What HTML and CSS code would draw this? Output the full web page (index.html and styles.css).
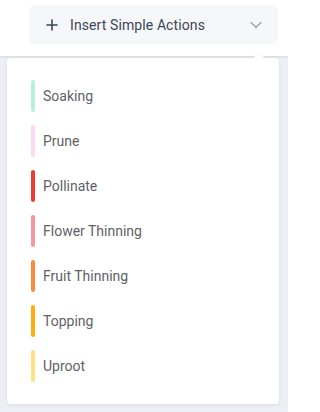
FILE: index.html
```html
<!DOCTYPE html>
<html>
<head>
<meta charset="utf-8">
<link rel="stylesheet" href="styles.css">
</head>
<body>
<div class="top">
  <div class="trigger">
    <svg class="plus" width="12" height="12" viewBox="0 0 12 12"><path d="M6 1v10M1 6h10" stroke="#3d4657" stroke-width="1.6" stroke-linecap="round"/></svg>
    <span class="label">Insert Simple Actions</span>
    <svg class="chev" width="12" height="8" viewBox="0 0 12 8"><path d="M1 1.5l5 5 5-5" fill="none" stroke="#9aa0a8" stroke-width="1.2" stroke-linecap="round" stroke-linejoin="round"/></svg>
  </div>
</div>
<div class="stage">
  <div class="panel">
    <div class="caret"></div>
    <ul class="list">
      <li class="item"><span class="bar" style="background:#b6f0da"></span>Soaking</li>
      <li class="item"><span class="bar" style="background:#fdd8f1"></span>Prune</li>
      <li class="item"><span class="bar" style="background:#f23a38"></span>Pollinate</li>
      <li class="item"><span class="bar" style="background:#f8959e"></span>Flower Thinning</li>
      <li class="item"><span class="bar" style="background:#fd8a3a"></span>Fruit Thinning</li>
      <li class="item"><span class="bar" style="background:#ffac0c"></span>Topping</li>
      <li class="item"><span class="bar" style="background:#fde182"></span>Uproot</li>
    </ul>
  </div>
</div>
</body>
</html>
```
FILE: styles.css
```css
html, body {
  margin: 0;
  padding: 0;
  background: #fff;
}
body {
  width: 288px;
  height: 412px;
  overflow: hidden;
  font-family: Roboto, "Liberation Sans", sans-serif;
}
.top {
  height: 56px;
  box-sizing: border-box;
  padding: 5px 10px 0 29px;
}
.trigger {
  height: 39px;
  background: #f5f7fa;
  border-radius: 6px;
  display: flex;
  align-items: center;
  padding: 0 16px 0 17px;
}
.plus {
  flex: none;
}
.label {
  margin-left: 12px;
  font-size: 14px;
  color: #3d4657;
  flex: 1;
  letter-spacing: 0.1px;
}
.chev {
  flex: none;
}
.stage {
  background: #eceff3;
  border-top: 1px solid #dde1e6;
  box-shadow: inset 0 1px 1px rgba(0,0,0,0.04);
  padding: 1px 9px 9px 7px;
  height: 356px;
  box-sizing: border-box;
}
.panel {
  position: relative;
  background: #fff;
  border-radius: 4px;
  box-shadow: 0 1px 4px rgba(0,0,0,0.08);
  padding: 22px 24px 22px 24px;
}
.caret {
  position: absolute;
  top: -4px;
  left: 248px;
  width: 8px;
  height: 8px;
  background: #fff;
  transform: rotate(45deg);
  box-shadow: -1px -1px 1px rgba(0,0,0,0.03);
}
.list {
  list-style: none;
  margin: 0;
  padding: 0;
  display: flex;
  flex-direction: column;
  gap: 13px;
}
.item {
  display: flex;
  align-items: center;
  height: 32px;
  font-size: 14px;
  color: #606266;
}
.bar {
  width: 4px;
  height: 32px;
  border-radius: 2px;
  margin-right: 8px;
  flex: none;
}
```
